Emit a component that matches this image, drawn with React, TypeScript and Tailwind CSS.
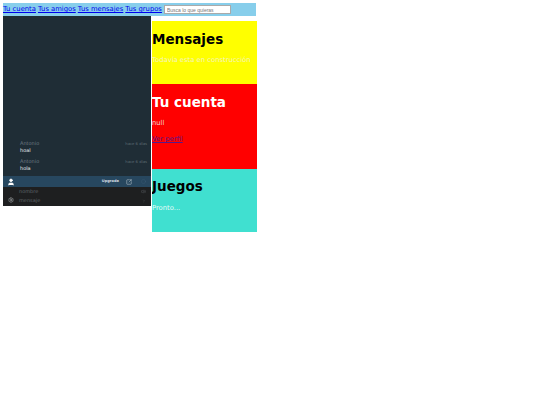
import { ChevronRight, Circle, Settings, SquareArrowOutUpRight, User, Volume2 } from 'lucide-react'

const font = { fontFamily: '"DejaVu Sans", sans-serif' }

const messages = [
  { name: 'Antonio', text: 'hoal', time: 'hace 6 días' },
  { name: 'Antonio', text: 'hola', time: 'hace 6 días' },
]

function Chat() {
  return (
    <div className="w-[148px] h-[190px] bg-[#1f2d36] flex flex-col">
      <div className="flex-1 flex flex-col justify-end pb-[1px]">
        {messages.map((m, i) => (
          <div key={i} className="h-[18px] pl-[17px] pr-[4px] flex justify-between">
            <div>
              <div className="text-[5px] leading-[7px] text-[#6d7b84] mt-[1px]">{m.name}</div>
              <div className="text-[5px] leading-[7px] text-[#e8ecee]">{m.text}</div>
            </div>
            <div className="text-[3.8px] leading-[7px] text-[#5d6b74] mt-[1px]">{m.time}</div>
          </div>
        ))}
      </div>
      <div className="h-[11px] shrink-0 bg-[#27475f] flex items-center pl-[4px] pr-[5px]">
        <User size={8} className="text-white" fill="white" />
        <span className="ml-auto text-[3.6px] font-bold text-[#d5dde2]">Upgrade</span>
        <SquareArrowOutUpRight size={6} className="ml-[7px] text-[#c5ced4]" />
        <Circle size={5} className="ml-[9px] text-[#3c5c74]" />
      </div>
      <div className="h-[19px] shrink-0 bg-[#1e1f20] flex pl-[5px] pr-[5px]">
        <Settings size={6} className="text-[#b0b4b6] mt-[10px]" />
        <div className="ml-[5px] flex-1">
          <div className="flex justify-between items-center h-[9px]">
            <span className="text-[5px] text-[#5f6468]">nombre</span>
            <Volume2 size={5} className="text-[#5f6468]" />
          </div>
          <div className="flex justify-between items-center h-[9px]">
            <span className="text-[5px] text-[#5f6468]">mensaje</span>
            <ChevronRight size={4} className="text-[#5f6468]" />
          </div>
        </div>
      </div>
    </div>
  )
}

export default function App() {
  return (
    <div className="p-[3px] text-[6.8px]" style={font}>
      <div className="w-[253px] h-[13px] bg-[#87ceeb] flex items-center gap-[2px]">
        <a href="#" className="text-[#0000ee] underline">Tu cuenta</a>
        <a href="#" className="text-[#0000ee] underline">Tus amigos</a>
        <a href="#" className="text-[#0000ee] underline">Tus mensajes</a>
        <a href="#" className="text-[#0000ee] underline">Tus grupos</a>
        <input
          readOnly
          placeholder="Busca lo que quieras"
          className="w-[67px] h-[9px] bg-white border border-[#aaa] px-[2px] text-[5px] placeholder:text-[#777]"
          style={{ fontFamily: '"Liberation Sans", sans-serif' }}
        />
      </div>
      <div className="flex items-start">
        <Chat />
        <div className="ml-[1px] mt-[5px] w-[105px]">
          <section className="h-[63px] bg-[#ffff00] overflow-hidden">
            <h2 className="mt-[8px] text-[13.5px] font-bold text-black">Mensajes</h2>
            <p className="mt-[6px] text-[6.8px] text-[#f5f5c0]">Todavía esta en construcción</p>
          </section>
          <section className="h-[84.5px] bg-[#ff0000] overflow-hidden">
            <h2 className="mt-[8px] text-[13.5px] font-bold text-white">Tu cuenta</h2>
            <p className="mt-[6px] text-[6.8px] text-[#f0d0d0]">null</p>
            <a href="#" className="block mt-[6px] text-[6.8px] text-[#551a8b] underline">Ver perfil</a>
          </section>
          <section className="h-[63.5px] bg-[#40e0d0] overflow-hidden">
            <h2 className="mt-[7px] text-[13.5px] font-bold text-black">Juegos</h2>
            <p className="mt-[7px] text-[6.8px] text-[#e6fbf8]">Pronto...</p>
          </section>
        </div>
      </div>
    </div>
  )
}
